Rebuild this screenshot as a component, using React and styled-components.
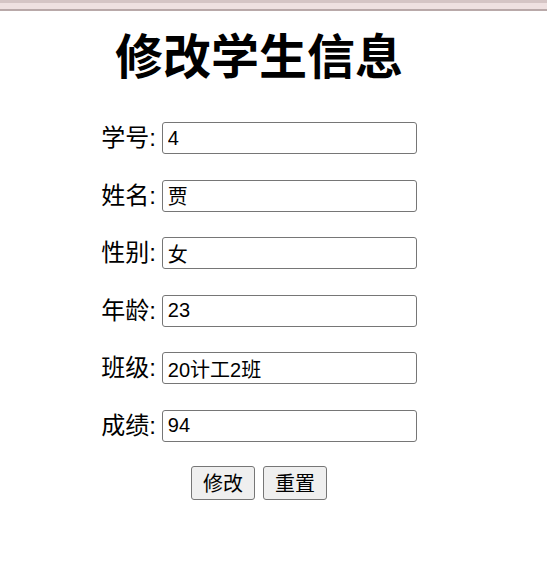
import React from "react";
import styled, { createGlobalStyle } from "styled-components";

const Global = createGlobalStyle`
  html, body { margin: 0; padding: 0; background: #ffffff; }
  body { font-family: "Liberation Sans", "Noto Sans CJK SC", sans-serif; color: #000; }
`;

const TopStrip = styled.div`
  height: 11px;
  background: linear-gradient(#d5c5c5 0 3px, #efe1e1 3px 9px, #b9a9a9 9px 11px);
`;

const Page = styled.div`
  width: 518px;
  display: flex;
  flex-direction: column;
  align-items: center;
`;

const Title = styled.h1`
  margin: 19px 0 36px;
  font-size: 48px;
  line-height: 56px;
  font-weight: 700;
  font-family: "Liberation Sans", "Noto Sans CJK SC", sans-serif;
`;

const Form = styled.form`
  display: flex;
  flex-direction: column;
  align-items: center;
  gap: 25.6px;
`;

const Row = styled.div`
  display: flex;
  align-items: center;
  gap: 6px;
`;

const Label = styled.label`
  font-size: 24px;
  line-height: 32px;
  font-family: "Liberation Sans", "Noto Sans CJK SC", sans-serif;
`;

const Input = styled.input`
  box-sizing: border-box;
  width: 255px;
  height: 32px;
  padding: 0 5px;
  border: 1px solid #767676;
  border-radius: 3px;
  font-size: 20px;
  font-family: "Liberation Sans", "Noto Sans CJK SC", sans-serif;
  color: #000;
  background: #fff;
  outline: none;
`;

const Buttons = styled.div`
  display: flex;
  gap: 8px;
  margin-top: -2px;
`;

const Button = styled.button`
  box-sizing: border-box;
  width: 64px;
  height: 34px;
  padding: 0;
  border: 1px solid #767676;
  border-radius: 3px;
  background: #efefef;
  font-size: 20px;
  font-family: "Liberation Sans", "Noto Sans CJK SC", sans-serif;
  color: #000;
`;

const fields = [
  ["学号", "4"],
  ["姓名", "贾"],
  ["性别", "女"],
  ["年龄", "23"],
  ["班级", "20计工2班"],
  ["成绩", "94"],
];

export default function App() {
  return (
    <>
      <Global />
      <TopStrip />
      <Page>
        <Title>修改学生信息</Title>
        <Form onSubmit={(e) => e.preventDefault()}>
          {fields.map(([label, value]) => (
            <Row key={label}>
              <Label>{label}:</Label>
              <Input defaultValue={value} />
            </Row>
          ))}
          <Buttons>
            <Button type="submit">修改</Button>
            <Button type="reset">重置</Button>
          </Buttons>
        </Form>
      </Page>
    </>
  );
}
